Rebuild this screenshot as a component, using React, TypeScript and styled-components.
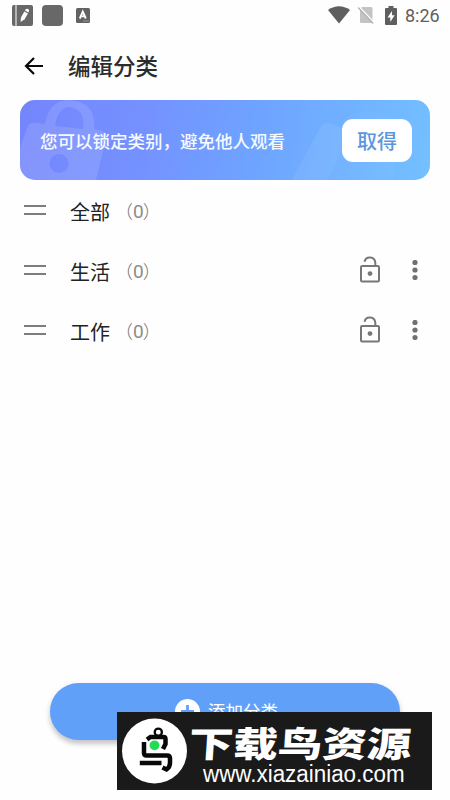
import React from 'react';
import styled, { createGlobalStyle } from 'styled-components';

const Global = createGlobalStyle`
  * { box-sizing: border-box; }
  body {
    margin: 0;
    background: #fff;
    font-family: Roboto, "Noto Sans CJK SC", sans-serif;
  }
`;

const Screen = styled.div`
  position: relative;
  width: 450px;
  height: 800px;
  overflow: hidden;
  display: flex;
  flex-direction: column;
  background: #fefefe;
`;

const StatusBar = styled.header`
  height: 32px;
  padding: 0 10px 2px 12px;
  display: flex;
  align-items: center;
  justify-content: space-between;
  svg { display: block; }
`;

const StatusGroup = styled.div`
  display: flex;
  align-items: center;
`;

const Clock = styled.span`
  width: 35px;
  margin-left: 8px;
  padding-top: 1px;
  font-size: 18px;
  line-height: 30px;
  color: #5f5f5f;
  white-space: nowrap;
`;

const TitleBar = styled.div`
  height: 68px;
  padding-left: 24px;
  display: flex;
  align-items: center;
  gap: 24px;
  svg { display: block; }
`;

const Title = styled.h1`
  margin: 0;
  padding-top: 2px;
  font-size: 22.5px;
  line-height: 30px;
  font-weight: 500;
  color: #2c2c2c;
`;

const Banner = styled.section`
  position: relative;
  height: 80px;
  margin: 0 20px;
  padding: 0 18px 0 20px;
  display: flex;
  align-items: center;
  justify-content: space-between;
  border-radius: 15px;
  overflow: hidden;
  background: linear-gradient(100deg, #7485fc 0%, #7590ff 28%, #6ea4ff 58%, #73c0ff 100%);
`;

const BannerArt = styled.svg`
  position: absolute;
  inset: 0;
`;

const BannerText = styled.p`
  position: relative;
  margin: 0;
  padding-top: 3px;
  color: #f6faff;
  font-size: 17.5px;
  font-weight: 500;
  line-height: 26px;
  white-space: nowrap;
`;

const GetButton = styled.button`
  position: relative;
  width: 70px;
  height: 43px;
  padding: 0;
  border: 0;
  border-radius: 11px;
  background: #fff;
  color: #5c96dc;
  font: 500 20px/47px Roboto, "Noto Sans CJK SC", sans-serif;
`;

const List = styled.ul`
  list-style: none;
  margin: 0;
  padding: 0;
`;

const Row = styled.li`
  height: 60px;
  padding: 0 32px 0 24px;
  display: flex;
  align-items: center;
`;

const Handle = styled.span`
  width: 22px;
  height: 10px;
  margin-right: 24px;
  border: solid #7d7d7d;
  border-width: 2px 0;
`;

const Name = styled.span`
  padding-top: 5px;
  font-size: 20px;
  line-height: 30px;
  color: #222;
`;

const Count = styled.span`
  margin-left: 5px;
  padding-top: 3px;
  font: 400 19px/30px Roboto, "Noto Sans CJK SC", sans-serif;
  color: #8c8c8c;
`;

const Paren = styled.span<{ $shift: number }>`
  font: 300 18px/26px "Noto Sans CJK SC", sans-serif;
  margin-left: ${({ $shift }) => $shift}px;
  color: #777;
`;

const Actions = styled.div`
  margin-left: auto;
  display: flex;
  align-items: center;
  gap: 32px;
  svg { display: block; }
`;

const AddButton = styled.button`
  width: 350px;
  height: 57px;
  margin: auto 50px 60px;
  padding: 0 0 0 3px;
  border: 0;
  border-radius: 29px;
  display: flex;
  align-items: center;
  justify-content: center;
  gap: 8px;
  background: #60a0f9;
  box-shadow: 0 4px 5px rgba(0, 0, 0, 0.2), 0 1px 8px rgba(0, 0, 0, 0.05);
  color: #fff;
  font: 400 17.5px/26px Roboto, "Noto Sans CJK SC", sans-serif;
`;

const Watermark = styled.aside`
  position: absolute;
  left: 117px;
  top: 712px;
  width: 315px;
  height: 78px;
  padding-left: 5px;
  display: flex;
  align-items: center;
  background: #1a1a1a;
  svg { display: block; flex: none; }
`;

const MarkText = styled.div`
  width: 240px;
  height: 78px;
  display: flex;
  flex-direction: column;
  color: #fff;
  white-space: nowrap;
`;

const MarkName = styled.span`
  height: 53px;
  padding-left: 2px;
  font: 900 44.5px/59px "Noto Sans CJK SC", sans-serif;
  transform: scaleY(0.79) skewX(-3deg);
  transform-origin: 50% 58%;
`;

const MarkUrl = styled.span`
  height: 25px;
  padding-left: 16px;
  font: 400 22.4px/20px "Liberation Sans", sans-serif;
  transform: scaleY(1.07);
  transform-origin: 50% 70%;
`;

const NotebookIcon = () => (
  <svg width="21" height="21" viewBox="0 0 21 21">
    <path d="M2 0H3.500v21H2Q0 21 0 19V2Q0 0 2 0ZM4.500 0H19Q21 0 21 2V19Q21 21 19 21H4.500Z" fill="#686868" />
    <path d="M8.500 17L9 12.500 12.300 6.400 15.900 8.400 12.600 14.300Z" fill="#fff" />
    <path d="M13 5.400L13.700 4.300Q14.600 3.200 16.200 4 17.500 5 16.900 6.400L16.400 7.400Z" fill="#fff" />
  </svg>
);

const SquareIcon = () => (
  <svg width="21" height="21" viewBox="0 0 21 21">
    <rect width="21" height="21" rx="4" fill="#686868" />
  </svg>
);

const LetterIcon = () => (
  <svg width="14" height="15" viewBox="0 0 14 15">
    <rect width="14" height="15" rx="1.500" fill="#626262" />
    <path d="M3.800 10.500L6.800 3.700 9.800 10.500M5 8.400H8.700" fill="none" stroke="#fff" strokeWidth="1.900" />
    <path d="M7.500 13h1M9.500 13h1M11.500 13h1" stroke="#ccc" strokeWidth="1" />
  </svg>
);

const WifiIcon = () => (
  <svg width="22" height="18" viewBox="0 0 22 18">
    <path d="M0 4Q11-3.500 22 4L11 17.500Z" fill="#5f5f5f" />
  </svg>
);

const NoSimIcon = () => (
  <svg width="16" height="18" viewBox="0 0 16 18">
    <path d="M4 1H13Q14.500 1 14.500 2.500V16Q14.500 17 13 17H3Q2 17 2 16V3Z" fill="#c3c3c3" />
    <path d="M1.500 1.200L16.700 17" stroke="#fff" strokeWidth="1.300" />
    <path d="M0 1.500L15.200 17.500" stroke="#b5b5b5" strokeWidth="1.400" />
  </svg>
);

const BatteryIcon = () => (
  <svg width="12" height="19" viewBox="0 0 12 19">
    <path d="M3.500 0H8.500V2H11Q12 2 12 3V18Q12 19 11 19H1Q0 19 0 18V3Q0 2 1 2H3.500Z" fill="#5f5f5f" />
    <path d="M7 5L2.500 11.500H5.300V16L9.600 9.300H7Z" fill="#fff" />
  </svg>
);

const BackIcon = () => (
  <svg width="20" height="20" viewBox="0 0 20 20">
    <path d="M19 10H2M10 2L2 10l8 8" fill="none" stroke="#080808" strokeWidth="2.200" />
  </svg>
);

const UnlockIcon = () => (
  <svg width="20" height="28" viewBox="0 0 20 28">
    <rect x="1" y="10" width="18" height="15.500" rx="1.200" fill="none" stroke="#777" strokeWidth="2" />
    <path d="M4.500 5.700A5.500 5.500 0 0 1 15.300 6.600V10" fill="none" stroke="#777" strokeWidth="2" />
    <circle cx="10" cy="17.600" r="2.400" fill="#777" />
  </svg>
);

const MoreIcon = () => (
  <svg width="6" height="20" viewBox="0 0 6 20">
    {[2.5, 10, 17.5].map((y) => (
      <circle key={y} cx="3" cy={y} r="2.600" fill="#707070" />
    ))}
  </svg>
);

const PlusIcon = () => (
  <svg width="25" height="25" viewBox="0 0 25 25">
    <circle cx="12.500" cy="12.500" r="12.500" fill="#fff" />
    <path d="M12.500 6v13M6 12.500h13" stroke="#60a0f9" strokeWidth="2.800" />
  </svg>
);

const BirdLogo = () => (
  <svg width="65" height="66" viewBox="0 0 65 66">
    <circle cx="32.500" cy="33" r="32.500" fill="#fff" />
    <g fill="none" stroke="#080808" strokeWidth="4.500">
      <circle cx="36.300" cy="14.200" r="3.600" strokeWidth="2.300" />
      <path d="M25 21.500L28.500 19H41.500Q43.500 19 43.500 21V26L41 31" />
      <path d="M22 24V35Q22 37.500 24.500 37.500H45Q48 37.500 48 40.500V45Q48 49 44.500 51.500L40.500 49.500" />
      <path d="M17.800 45H39.500" />
    </g>
    <circle cx="32.500" cy="27.300" r="4.900" fill="#22dc55" />
  </svg>
);

const IconSlot = styled.span<{ $gap: number }>`
  display: block;
  margin-left: ${({ $gap }) => $gap}px;
`;

const categories = [
  { name: '全部', count: 0, editable: false },
  { name: '生活', count: 0, editable: true },
  { name: '工作', count: 0, editable: true },
];

export default function App() {
  return (
    <>
      <Global />
      <Screen>
        <StatusBar>
          <StatusGroup>
            <NotebookIcon />
            <IconSlot $gap={9}><SquareIcon /></IconSlot>
            <IconSlot $gap={13}><LetterIcon /></IconSlot>
          </StatusGroup>
          <StatusGroup>
            <WifiIcon />
            <IconSlot $gap={8}><NoSimIcon /></IconSlot>
            <IconSlot $gap={11}><BatteryIcon /></IconSlot>
            <Clock>8:26</Clock>
          </StatusGroup>
        </StatusBar>
        <TitleBar>
          <BackIcon />
          <Title>编辑分类</Title>
        </TitleBar>
        <Banner>
          <BannerArt width="410" height="80" viewBox="0 0 410 80">
            <path
              d="M0 48L7 28Q9 22 16 23L25 24Q29 0 49 0 77 2 74 29L83 31Q87 33 86 38L76 80H0ZM35 26L63 29Q66 10 50 7 38 7 35 26ZM39 54A9.500 9.500 0 1 0 39 73 9.500 9.500 0 1 0 39 54Z"
              fillRule="evenodd"
              fill="#fff"
              opacity="0.12"
            />
            <path d="M272 80L300 28Q304 21 311 24L322 28V50L308 80Z" fill="#fff" opacity="0.07" />
            <path d="M322 20Q335 11 348 11T374 20V80H308L322 50Z" fill="#fff" opacity="0.03" />
          </BannerArt>
          <BannerText>您可以锁定类别，避免他人观看</BannerText>
          <GetButton>取得</GetButton>
        </Banner>
        <List>
          {categories.map(({ name, count, editable }) => (
            <Row key={name}>
              <Handle />
              <Name>{name}</Name>
              <Count>
                <Paren $shift={0}>（</Paren>
                {count}
                <Paren $shift={-1}>）</Paren>
              </Count>
              {editable && (
                <Actions>
                  <UnlockIcon />
                  <MoreIcon />
                </Actions>
              )}
            </Row>
          ))}
        </List>
        <AddButton>
          <PlusIcon />
          添加分类
        </AddButton>
        <Watermark>
          <BirdLogo />
          <MarkText>
            <MarkName>下载鸟资源</MarkName>
            <MarkUrl>www.xiazainiao.com</MarkUrl>
          </MarkText>
        </Watermark>
      </Screen>
    </>
  );
}
